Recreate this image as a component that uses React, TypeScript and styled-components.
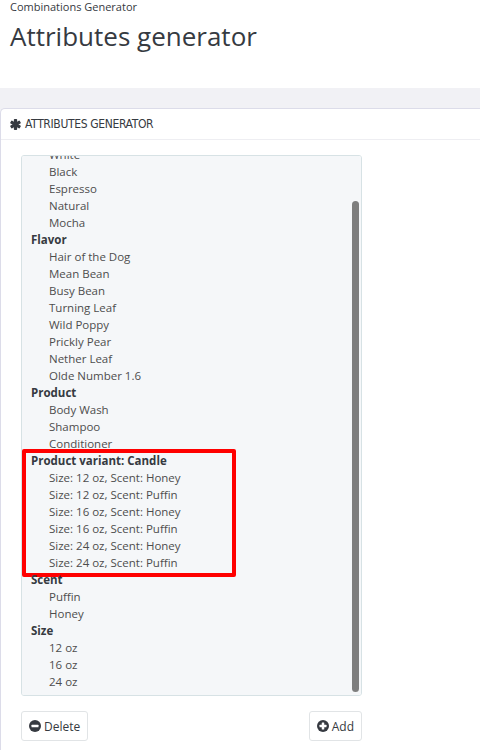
import { useLayoutEffect, useRef, useState } from 'react';
import styled, { createGlobalStyle } from 'styled-components';

const groups: { label: string; items: string[]; marked?: boolean }[] = [
  { label: 'Color', items: ['Gray', 'White', 'Black', 'Espresso', 'Natural', 'Mocha'] },
  {
    label: 'Flavor',
    items: [
      'Hair of the Dog',
      'Mean Bean',
      'Busy Bean',
      'Turning Leaf',
      'Wild Poppy',
      'Prickly Pear',
      'Nether Leaf',
      'Olde Number 1.6',
    ],
  },
  { label: 'Product', items: ['Body Wash', 'Shampoo', 'Conditioner'] },
  {
    label: 'Product variant: Candle',
    marked: true,
    items: [
      'Size: 12 oz, Scent: Honey',
      'Size: 12 oz, Scent: Puffin',
      'Size: 16 oz, Scent: Honey',
      'Size: 16 oz, Scent: Puffin',
      'Size: 24 oz, Scent: Honey',
      'Size: 24 oz, Scent: Puffin',
    ],
  },
  { label: 'Scent', items: ['Puffin', 'Honey'] },
  { label: 'Size', items: ['12 oz', '16 oz', '24 oz'] },
];

export default function App() {
  const listRef = useRef<HTMLDivElement>(null);
  const [thumb, setThumb] = useState({ top: 0, height: 0 });

  // scroll the list to its end and draw an overlay thumb like the mac one
  useLayoutEffect(() => {
    const el = listRef.current;
    if (!el) return;
    el.scrollTop = el.scrollHeight;
    const track = el.clientHeight - 4;
    setThumb({
      top: 2 + (el.scrollTop / el.scrollHeight) * track,
      height: (el.clientHeight / el.scrollHeight) * track,
    });
  }, []);

  return (
    <>
      <GlobalStyle />
      <PageHeader>
        <Breadcrumb>Combinations Generator</Breadcrumb>
        <PageTitle>Attributes generator</PageTitle>
      </PageHeader>
      <Content>
        <Panel>
          <PanelHeading>
            <AsteriskIcon />
            Attributes generator
          </PanelHeading>
          <PanelBody>
            <ListFrame>
              <ListBox ref={listRef}>
                {groups.map((g) => (
                  <Group key={g.label}>
                    {g.marked && <Highlight />}
                    <GroupLabel>{g.label}</GroupLabel>
                    {g.items.map((item) => (
                      <Option key={item}>{item}</Option>
                    ))}
                  </Group>
                ))}
              </ListBox>
              <ScrollThumb style={{ top: thumb.top, height: thumb.height }} />
            </ListFrame>
            <Actions>
              <Button>
                <MinusCircle />
                Delete
              </Button>
              <Button>
                <PlusCircle />
                Add
              </Button>
            </Actions>
          </PanelBody>
        </Panel>
      </Content>
    </>
  );
}

function AsteriskIcon() {
  return (
    <svg width="11" height="11" viewBox="0 0 24 24" fill="#363a41">
      <g transform="translate(12 12)">
        <rect x="-3.6" y="-12" width="7.2" height="24" rx="1.8" />
        <rect x="-3.6" y="-12" width="7.2" height="24" rx="1.8" transform="rotate(60)" />
        <rect x="-3.6" y="-12" width="7.2" height="24" rx="1.8" transform="rotate(-60)" />
      </g>
    </svg>
  );
}

function MinusCircle() {
  return (
    <svg width="12" height="12" viewBox="0 0 24 24">
      <circle cx="12" cy="12" r="12" fill="#363a41" />
      <rect x="5" y="9.5" width="14" height="5" rx="1" fill="#fff" />
    </svg>
  );
}

function PlusCircle() {
  return (
    <svg width="12" height="12" viewBox="0 0 24 24">
      <circle cx="12" cy="12" r="12" fill="#363a41" />
      <rect x="5" y="9.5" width="14" height="5" rx="1" fill="#fff" />
      <rect x="9.5" y="5" width="5" height="14" rx="1" fill="#fff" />
    </svg>
  );
}

const GlobalStyle = createGlobalStyle`
  body {
    margin: 0;
    background: #fff;
    font-family: "Open Sans", "Noto Sans", sans-serif;
    color: #363a41;
  }
`;

const PageHeader = styled.header`
  padding: 0 10px;
  height: 88px;
`;

const Breadcrumb = styled.div`
  font-size: 11px;
  line-height: 14px;
`;

const PageTitle = styled.h1`
  margin: 4px 0 0;
  font-size: 26px;
  font-weight: 400;
  line-height: 36px;
`;

const Content = styled.main`
  background: #f1f1f5;
  padding-top: 20px;
  min-height: 642px;
  display: flex;
  flex-direction: column;
`;

const Panel = styled.section`
  flex: 1;
  background: #fff;
  border: 1px solid #dcdce9;
  border-right: none;
  border-bottom: none;
  border-top-left-radius: 5px;
`;

const PanelHeading = styled.div`
  display: flex;
  align-items: center;
  gap: 4px;
  height: 30px;
  padding: 0 9px;
  border-bottom: 1px solid #eeeef2;
  font-family: "DejaVu Sans Condensed", "DejaVu Sans", sans-serif;
  font-stretch: condensed;
  font-size: 12px;
  letter-spacing: -0.35px;
  text-transform: uppercase;
`;

const PanelBody = styled.div`
  padding: 15px 20px;
`;

const ListFrame = styled.div`
  position: relative;
  width: 341px;
`;

const ListBox = styled.div`
  box-sizing: border-box;
  width: 100%;
  height: 541px;
  overflow-y: scroll;
  scrollbar-width: none;
  background: #f5f7f9;
  border: 1px solid #d7e2e5;
  border-radius: 3px;
  padding: 4px 0 5px;
  font-size: 11.5px;
  line-height: 17px;
  color: #4d4d4d;
`;

const ScrollThumb = styled.div`
  position: absolute;
  right: 3px;
  width: 7px;
  border-radius: 4px;
  background: #7e7e7e;
`;

const Group = styled.div`
  position: relative;
  width: 214px;
`;

const Highlight = styled.div`
  position: absolute;
  top: -3px;
  left: 0;
  right: 0;
  bottom: -6px;
  border: 4px solid #f00;
  border-radius: 2px;
  pointer-events: none;
`;

const GroupLabel = styled.div`
  padding-left: 9px;
  font-weight: 700;
  color: #363a41;
`;

const Option = styled.div`
  padding-left: 27px;
  white-space: nowrap;
`;

const Actions = styled.div`
  width: 341px;
  display: flex;
  justify-content: space-between;
  margin-top: 15px;
`;

const Button = styled.button`
  display: inline-flex;
  align-items: center;
  gap: 3px;
  height: 30px;
  padding: 0 7px;
  background: #fff;
  border: 1px solid #e1e4e6;
  border-radius: 3px;
  font-family: "Open Sans", "Noto Sans", sans-serif;
  font-size: 12px;
  color: #363a41;
`;
